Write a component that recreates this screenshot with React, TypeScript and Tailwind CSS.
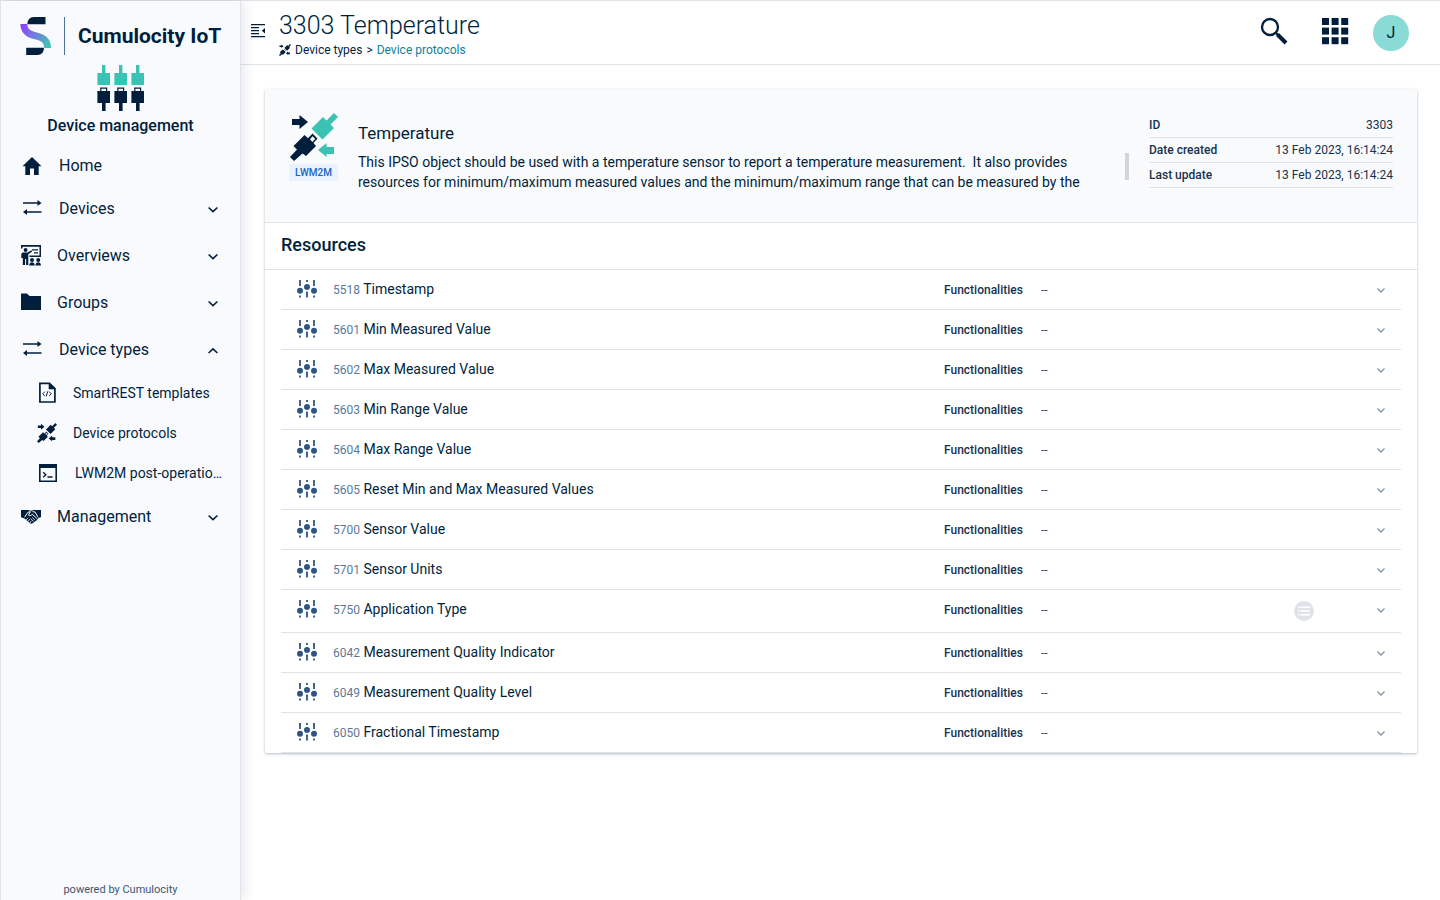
import React from 'react';

type IconProps = { className?: string };

function BrandMark() {
  return (
    <svg width="32" height="38" viewBox="0 0 32 38" aria-hidden="true">
      <defs>
        <linearGradient id="brand" x1="0" y1="0.2" x2="1" y2="0.8">
          <stop offset="0" stopColor="#8f43f5" />
          <stop offset="0.5" stopColor="#6f84dc" />
          <stop offset="1" stopColor="#3fc4b4" />
        </linearGradient>
      </defs>
      <path d="M14 0H25.5V7.3H7.3C7.6 3 9.5 0 14 0Z" fill="#011f3d" />
      <path d="M0.3 7H7.2C7.5 12.3 10.5 13.8 16 15.2C25 17.5 31 21 31 31H24.2C24 25.8 21.5 24 16 22.6C7 20.5 0.8 17 0.3 7Z" fill="url(#brand)" />
      <path d="M6.2 30.8H24C23.8 35 21.7 38 17.5 38H6.2Z" fill="#011f3d" />
    </svg>
  );
}

function ConnectorsIcon() {
  return (
    <svg width="48" height="46" viewBox="0 0 48 46" aria-hidden="true">
      {[0, 17, 34].map((x) => (
        <g key={x} transform={`translate(${x} 0)`}>
          <path d="M5 0H8.4V8H13V20H0.4V8H5Z" fill="#3ac2b5" />
          <path d="M3.2 26V22.5H10.2V26H13V38H8.6V46H5V38H0.4V26ZM4.4 26H9V23.7H4.4Z" fill="#011f3d" fillRule="evenodd" />
        </g>
      ))}
    </svg>
  );
}

function ProtocolIcon({ className, accent = 'currentColor' }: IconProps & { accent?: string }) {
  return (
    <svg className={className} viewBox="0 0 48 48" aria-hidden="true">
      <path d="M2 6H9.5V2L18 9L9.5 16V12H2Z" fill="currentColor" />
      <path d="M44 0L48 4L40.5 11.5L44 15L32.5 26.5L21.5 15.5L33 4L36.5 7.5Z" fill={accent} />
      <path d="M28 37L36.5 30V34H44V41H36.5V44Z" fill={accent} />
      <path d="M14.5 22L18 25.2L22.5 20.5L27.5 25.5L23.5 30L26 33L16 43L12.5 40.5L4 48L0 44L7 36.5L3.5 33ZM20 26.5L22.5 29L25.2 25.7L22.4 23.2Z" fill="currentColor" fillRule="evenodd" />
    </svg>
  );
}

function HomeIcon() {
  return (
    <svg width="20" height="20" viewBox="0 0 20 20" fill="currentColor" aria-hidden="true">
      <path d="M10 1L19.5 10.2H16.7V19H12V12.5H8V19H3.3V10.2H0.5Z" />
    </svg>
  );
}

function TransferIcon() {
  return (
    <svg width="20" height="20" viewBox="0 0 20 20" fill="currentColor" aria-hidden="true">
      <path d="M0 3.3H14.5V1L18.5 4L14.5 7V4.7H0Z" />
      <path d="M18.5 12.3H4V10L0 13L4 16V13.7H18.5Z" />
    </svg>
  );
}

function OverviewIcon() {
  return (
    <svg width="20" height="22" viewBox="0 0 20 22" fill="currentColor" aria-hidden="true">
      <path d="M0 0H20V12H18.5V1.8H1.5V3.5H0Z" />
      <circle cx="4.6" cy="5" r="1.9" />
      <path d="M1.5 7.5H6.5L10.5 5.3L11.2 6.5L7.3 9.2V20H5.1V14H4.1V20H1.8V13H0.3V9Z" />
      <path d="M11 4.2H17V5.4H11ZM13 7.2H17V8.4H13ZM8.5 10.6H19V12H8.5Z" />
      <circle cx="11" cy="14.9" r="2" />
      <circle cx="17.2" cy="14.9" r="2" />
      <path d="M8.2 20.5C8.2 16 13.8 16 13.8 20.5ZM14.4 20.5C14.4 16 20 16 20 20.5Z" />
    </svg>
  );
}

function FolderIcon() {
  return (
    <svg width="20" height="20" viewBox="0 0 20 20" fill="currentColor" aria-hidden="true">
      <path d="M0 0.5H6L8.5 3H20V17H0Z" />
    </svg>
  );
}

function HandshakeIcon() {
  return (
    <svg width="20" height="16" viewBox="0 0 20 16" aria-hidden="true">
      <path d="M0 1H7L10 1.8L13 1H20V8.2L17.5 8.8L15.5 11.5L10.8 14.8L9 14.3L3.5 9.6L0 8.2Z" fill="currentColor" />
      <g fill="none" stroke="#f9fafd" strokeWidth="1">
        <path d="M3.6 8.2L6.8 3.4L9.5 2.6L7.4 6.2C8.4 7.2 9.8 6.8 11.2 5.2L16.2 9.6" />
        <path d="M11.5 2.6L14 3L16.8 7.8" />
        <path d="M4.8 11.2L7 8.8M6.6 12.8L8.8 10.2M8.6 14.2L10.4 11.8M11.2 8.4L14 11.2M9.8 9.6L12.4 12.6" strokeWidth="0.8" />
      </g>
    </svg>
  );
}

function CodeFileIcon() {
  return (
    <svg width="20" height="22" viewBox="0 0 20 22" fill="none" stroke="currentColor" aria-hidden="true">
      <path d="M2.9 1.4H12.5L17.9 6.5V20H2.9Z" strokeWidth="1.7" />
      <path d="M12 1V7H18.3Z" fill="currentColor" strokeWidth="0.6" />
      <path d="M7.8 9.7L5.7 11.8L7.8 13.9M12.2 9.7L14.3 11.8L12.2 13.9M10.8 9.3L9.2 14.3" strokeWidth="1" />
    </svg>
  );
}

function TerminalIcon() {
  return (
    <svg width="20" height="20" viewBox="0 0 20 20" fill="none" stroke="currentColor" aria-hidden="true">
      <path d="M1.8 2H18.2V18.2H1.8Z" strokeWidth="1.6" />
      <path d="M1 1H19V5H1Z" fill="currentColor" stroke="none" />
      <path d="M5.2 9.2L7.8 11.7L5.2 14.2M9.5 14H14.5" strokeWidth="1.4" />
    </svg>
  );
}

function SlidersIcon() {
  return (
    <svg width="20" height="18" viewBox="0 0 20 18" fill="currentColor" className="text-[#2f5683]" aria-hidden="true">
      <path d="M2.1 0H3.9V6H2.1ZM9.1 0H10.9V2H9.1ZM16.1 0H17.9V6H16.1ZM2.1 15.5H3.9V17.5H2.1ZM9.1 11.5H10.9V17.5H9.1ZM16.1 15.5H17.9V17.5H16.1Z" />
      <circle cx="3" cy="10.8" r="3" />
      <circle cx="10" cy="7" r="3" />
      <circle cx="17" cy="10.8" r="3" />
    </svg>
  );
}

function Chevron({ up = false }: { up?: boolean }) {
  return (
    <svg width="10" height="12" viewBox="0 0 10 12" fill="none" stroke="currentColor" strokeWidth="1.6" aria-hidden="true">
      <path d={up ? 'M0.6 9L5 4.8L9.4 9' : 'M0.6 4.5L5 8.7L9.4 4.5'} />
    </svg>
  );
}

function NavGroup({ icon, label, open, wide }: { icon: React.ReactNode; label: string; open?: boolean; wide?: boolean }) {
  return (
    <button
      type="button"
      aria-expanded={!!open}
      className={`flex h-[47px] w-full items-center gap-4 pr-[22px] text-left ${wide ? 'pl-[22px]' : 'pl-5'}`}
    >
      {icon}
      <span className="flex-1">{label}</span>
      <Chevron up={open} />
    </button>
  );
}

function SubLink({ icon, label, wide }: { icon: React.ReactNode; label: string; wide?: boolean }) {
  return (
    <a href="#" className={`flex h-10 items-center text-sm ${wide ? 'gap-[17px] pr-[15px] pl-[37px]' : 'gap-4 pr-[17px] pl-9'}`}>
      {icon}
      <span className="min-w-0 flex-1 truncate">{label}</span>
    </a>
  );
}

const resources = [
  { id: '5518', name: 'Timestamp' },
  { id: '5601', name: 'Min Measured Value' },
  { id: '5602', name: 'Max Measured Value' },
  { id: '5603', name: 'Min Range Value' },
  { id: '5604', name: 'Max Range Value' },
  { id: '5605', name: 'Reset Min and Max Measured Values' },
  { id: '5700', name: 'Sensor Value' },
  { id: '5701', name: 'Sensor Units' },
  { id: '5750', name: 'Application Type', multiple: true },
  { id: '6042', name: 'Measurement Quality Indicator' },
  { id: '6049', name: 'Measurement Quality Level' },
  { id: '6050', name: 'Fractional Timestamp' },
];

const details = [
  ['ID', '3303'],
  ['Date created', '13 Feb 2023, 16:14:24'],
  ['Last update', '13 Feb 2023, 16:14:24'],
];

function Sidebar() {
  return (
    <aside className="z-10 flex w-[241px] shrink-0 flex-col border-x border-[#e0e3e8] bg-[#f9fafd] shadow-[2px_0_12px_rgba(1,31,61,0.12)]">
      <div className="flex items-center pt-4 pl-[19px]">
        <BrandMark />
        <span className="ml-3 h-[38px] w-px bg-[#4f7394]" />
        <span className="ml-[13px] text-[21px] leading-[38px] font-bold whitespace-nowrap">Cumulocity IoT</span>
      </div>
      <div className="flex flex-col items-center pt-[10px]">
        <ConnectorsIcon />
        <h2 className="mt-[3px] text-base leading-6 font-medium">Device management</h2>
      </div>
      <nav className="pt-2 text-base">
        <a href="#" className="flex h-[39px] items-center gap-[17px] pl-[21px]">
          <HomeIcon />
          <span>Home</span>
        </a>
        <NavGroup icon={<TransferIcon />} label="Devices" wide />
        <NavGroup icon={<OverviewIcon />} label="Overviews" />
        <NavGroup icon={<FolderIcon />} label="Groups" />
        <NavGroup icon={<TransferIcon />} label="Device types" wide open />
        <SubLink icon={<CodeFileIcon />} label="SmartREST templates" />
        <SubLink icon={<ProtocolIcon className="size-5" />} label="Device protocols" />
        <SubLink icon={<TerminalIcon />} label="LWM2M post-operations" wide />
        <NavGroup icon={<HandshakeIcon />} label="Management" />
      </nav>
      <p className="mt-auto pb-[2px] text-center text-[11px] leading-4 text-[#3c5670]">powered by Cumulocity</p>
    </aside>
  );
}

function TopBar() {
  return (
    <header className="flex h-16 items-center border-b border-[#dfe3ea] bg-white pr-[31px] pl-[10px]">
      <button type="button" aria-label="Toggle navigation" className="mb-1">
        <svg width="14" height="14" viewBox="0 0 14 14" fill="currentColor" aria-hidden="true">
          <path d="M0 0H14V1.3H0ZM0 3H8V4.3H0ZM0 6H8V7.3H0ZM0 9H8V10.3H0ZM0 12H14V13.3H0ZM14 4V9.4L10.8 6.7Z" />
        </svg>
      </button>
      <div className="ml-[14px] flex-1 pt-[2px]">
        <h1 className="text-[25px] leading-8 font-light">3303 Temperature</h1>
        <div className="flex items-center gap-1 text-xs leading-4">
          <ProtocolIcon className="size-3" />
          <span>Device types</span>
          <span>&gt;</span>
          <a href="#" className="text-[#11809a]">Device protocols</a>
        </div>
      </div>
      <button type="button" aria-label="Search" className="mr-[34px] mb-1">
        <svg width="28" height="28" viewBox="0 0 28 28" fill="none" stroke="currentColor" aria-hidden="true">
          <circle cx="10" cy="10" r="8" strokeWidth="2.3" />
          <path d="M15.8 15.8L18 18" strokeWidth="2.4" />
          <path d="M17.5 17.5L26 26" strokeWidth="4" />
        </svg>
      </button>
      <button type="button" aria-label="Applications" className="mr-6 mb-[2px]">
        <svg width="27" height="27" viewBox="0 0 27 27" fill="currentColor" aria-hidden="true">
          {[0, 9.6, 19.2].map((y) => [0, 9.6, 19.2].map((x) => <rect key={`${x}-${y}`} x={x} y={y} width="7" height="7" />))}
        </svg>
      </button>
      <button type="button" aria-label="User" className="size-9 rounded-full bg-[#8adbd5] text-base">J</button>
    </header>
  );
}

export default function App() {
  return (
    <div className="flex min-h-screen border-t border-[#e0e2e5] bg-white font-[Roboto,sans-serif] text-[#011f3d]">
      <Sidebar />
      <div className="min-w-0 flex-1">
        <TopBar />
        <main className="pt-6 pr-[23px] pl-6">
          <section className="rounded-xs bg-white shadow-[0_1px_3px_rgba(1,31,61,0.3)]">
            <div className="flex h-[134px] items-start border-b border-[#dfe3e9] bg-[#f9fafc] px-6 pt-6">
              <div className="flex w-[49px] shrink-0 flex-col items-center gap-[3px]">
                <ProtocolIcon className="size-12" accent="#3ac2b5" />
                <span className="w-full rounded-xs bg-[#e8f3ff] text-center text-[10px] leading-[17px] font-medium text-[#1a64c4]">LWM2M</span>
              </div>
              <div className="ml-5 flex min-w-0 flex-1 items-end">
                <div className="min-w-0 flex-1 pt-[10px] pr-10">
                  <h3 className="text-[17px] leading-5">Temperature</h3>
                  <p className="mt-[9px] text-sm leading-5 whitespace-pre-wrap">
                    {'This IPSO object should be used with a temperature sensor to report a temperature measurement.  It also provides resources for minimum/maximum measured values and the minimum/maximum range that can be measured by the'}
                  </p>
                </div>
                <span className="mb-3 h-[27px] w-1 bg-[#d3d5d8]" />
              </div>
              <dl className="ml-5 w-[244px] shrink-0 text-xs text-[#16324f]">
                {details.map(([term, value]) => (
                  <div key={term} className="flex h-[25px] items-center justify-between border-b border-[#dfe3e9]">
                    <dt className="font-medium">{term}</dt>
                    <dd>{value}</dd>
                  </div>
                ))}
              </dl>
            </div>
            <h2 className="h-[47px] border-b border-[#dfe3e9] px-4 text-lg leading-[44px] font-medium">Resources</h2>
            <ul className="px-4">
              {resources.map((item) => (
                <li key={item.id} className={`flex items-start border-b border-[#dfe3e9] px-4 ${item.multiple ? 'h-[43px]' : 'h-10'}`}>
                  <div className="flex h-[38px] flex-1 items-center">
                    <SlidersIcon />
                    <p className="ml-4 text-sm">
                      <span className="text-xs text-[#5d7896]">{item.id}</span> {item.name}
                    </p>
                  </div>
                  <div className="flex h-[39px] w-[441px] items-center">
                    <span className="text-xs font-medium text-[#16324f]">Functionalities</span>
                    <span className="ml-[18px] text-xs text-[#2f5683]">--</span>
                    {item.multiple && (
                      <span className="mt-[2px] mr-[63px] ml-auto flex size-5 items-center justify-center rounded-full bg-[#dfe3e9] text-white">
                        <svg width="12" height="10" viewBox="0 0 12 10" fill="currentColor" aria-hidden="true">
                          <path d="M0 0.5H1.6V2H0ZM2.4 0.5H12V2H2.4ZM0 4.2H1.6V5.7H0ZM2.4 4.2H12V5.7H2.4ZM0 8H1.6V9.5H0ZM2.4 8H12V9.5H2.4Z" />
                        </svg>
                      </span>
                    )}
                    <button type="button" aria-label={`Expand ${item.name}`} className={item.multiple ? 'text-[#8595a8]' : 'ml-auto text-[#8595a8]'}>
                      <svg width="8" height="8" viewBox="0 0 8 8" fill="none" stroke="currentColor" strokeWidth="1.4" aria-hidden="true">
                        <path d="M0.5 2.5L4 6L7.5 2.5" />
                      </svg>
                    </button>
                  </div>
                </li>
              ))}
            </ul>
          </section>
        </main>
      </div>
    </div>
  );
}
